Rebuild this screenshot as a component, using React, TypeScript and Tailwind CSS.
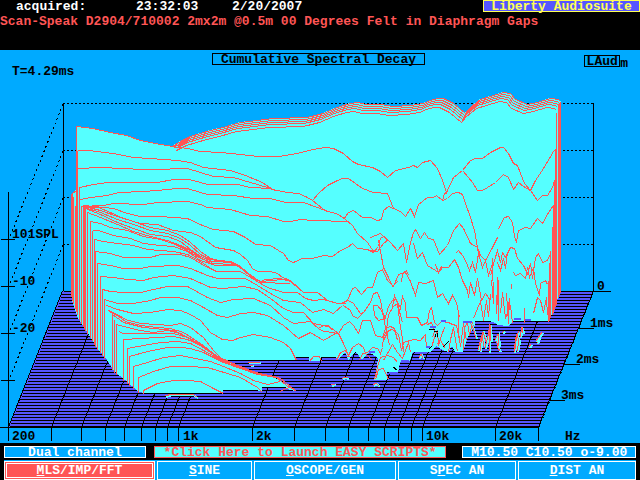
import type { ReactNode } from 'react'

const RED = '#ff5555'
const CYAN = '#55ffff'
const BLUE = '#5555ff'

const freqTicks = [8, 51, 81, 105, 124, 141, 155, 167, 178, 252, 294, 325, 348, 368, 384, 398, 411, 422, 495]

const freqLabels = [
  { x: 12, text: '200' },
  { x: 183, text: '1k' },
  { x: 256, text: '2k' },
  { x: 426, text: '10k' },
  { x: 499, text: '20k' },
  { x: 565, text: 'Hz' },
]

const timeTicks = [
  { x: 593, y: 291, w: 18, lx: 597, text: '0' },
  { x: 579, y: 328, w: 15, lx: 590, text: '1ms' },
  { x: 564, y: 364, w: 16, lx: 576, text: '2ms' },
  { x: 550, y: 400, w: 15, lx: 561, text: '3ms' },
]

const levelLabels = [
  { y: 238, text: '101SPL' },
  { y: 285, text: '-10' },
  { y: 332, text: '-20' },
]

const crest =
  '180,141 190,136 210,130 223,127 240,122 257,120 273,118 307,117 323,113 337,107 350,103 357,102 366,104 380,104 393,106 410,105 423,103 430,100 437,98 443,98 453,103 459,108 465,113 470,107 480,99 490,96 503,92 510,93 515,99 527,104 537,102 550,98 558,99 560,101'

const body =
  '72,193 76,190 76,126 92,128 110,132 126,135 140,140 160,144 172,146 180,141 190,136 210,130 223,127 240,122 257,120 273,118 307,117 323,113 337,107 350,103 357,102 366,104 380,104 393,106 410,105 423,103 437,98 443,98 453,103 465,113 470,107 480,99 490,96 503,92 510,93 515,99 527,104 537,102 550,98 558,99 561,101 561,291 558,298 553,312 548,321 513,321 508,326 498,325 495,323 490,321 475,321 475,325 468,337 463,352 455,352 452,346 448,352 443,350 436,346 431,352 425,352 413,352 410,361 400,362 398,373 387,372 387,380 374,380 377,366 378,358 369,352 362,360 356,352 350,357 349,361 345,352 338,360 335,357 321,357 320,361 309,361 309,357 296,357 296,360 223,360 243,367 257,373 270,376 280,380 296,391 290,390 285,387 262,387 262,392 257,390 223,390 223,393 143,393 138,391 125,380 115,372 107,360 97,348 88,333 78,318 72,300'

// left edge of every slice: x, top y, floor y
const leftEdges = [
  [71, 193, 296], [72, 193, 300], [73, 196, 303], [75, 205, 308], [76, 126, 311], [77, 150, 314], [79, 187, 319], [81, 206, 323],
  [83, 205, 326], [84, 206, 328], [85, 208, 330], [87, 212, 333], [90, 221, 337], [92, 230, 340], [94, 239, 344],
  [95, 250, 346], [97, 263, 349], [100, 276, 352], [102, 289, 355], [104, 299, 358], [112, 314, 369], [114, 319, 372],
  [116, 324, 374], [123, 338, 380], [127, 347, 383], [129, 355, 385], [133, 366, 388], [138, 377, 392], [143, 390, 393],
]

const rightEdges = [
  [560, 101, 292], [559, 102, 294], [558, 103, 297], [556, 112, 304], [555, 148, 306], [554, 180, 309],
  [553, 204, 312], [552, 226, 314], [550, 250, 317], [549, 262, 320], [548, 280, 321],
]

const slices = [
  // back wall
  '76,126 92,128 110,132 126,135 140,140 160,144 172,146 187,148 200,151 220,152 240,154 258,156 278,156 297,153 312,149 325,147 333,148 343,153 352,161 358,164 372,167 380,171 387,177 395,170 408,167 413,165 417,167 422,162 430,160 437,168 442,180 446,192 453,177 462,170 470,160 475,158 482,158 490,152 500,147 503,147 508,153 513,163 517,165 520,173 524,183 530,190 535,180 543,168 553,151 556,148',
  '172,146 180,141',
  '172,146 180,144',
  '173,147 180,147',
  '77,150 88,150 113,153 133,157 150,158 163,159 177,160 190,162 203,167 230,170 245,175 262,182 272,189 287,192 298,193 305,196 312,200 322,208 325,210 338,214 345,219 352,225 357,233 367,242 373,251 376,250',
  '77,168 100,167 122,168 143,169 160,169 180,168 187,168 200,172 213,176 233,177 250,182 267,187 275,190',
  '79,187 93,184 107,182 157,182 173,179 187,179 193,180 207,184 237,184 250,187 270,188',
  '80,199 90,197 107,195 118,192 143,191 157,190 177,188 187,188 200,192 207,194 233,195 253,198 270,198 285,202 303,202 317,207 327,211',
  '81,206 103,205 113,203 143,204 157,202 187,201 200,204 207,207 230,209 250,215 267,216 283,221 290,221 300,219 313,220 347,221',
  '312,200 318,193 327,185 337,180 342,178 348,178 355,183 362,188 373,192 387,193 393,208 400,211 405,216 410,208 414,216 418,204 427,197 433,197 436,195 442,200 447,198 452,193 458,192 462,194 465,203 470,217 474,230 477,247 480,255',
  '343,219 348,212 353,210 362,217 370,217 377,220 381,219 383,210 388,206 393,208',
  '463,171 472,182 477,190 482,190 487,187 495,182 503,174 508,177 513,189 518,182 523,186 530,190 537,200 542,195 547,195 552,187 554,180',
  '442,200 444,193 446,192',
  // middle left
  '83,205 93,206 113,208 127,213 140,216 160,216 173,217 187,218 202,225 213,229 233,231 245,237 255,244 270,245 278,250 283,253 288,260 293,262 302,258 312,258 323,255 332,256 340,250 347,247 352,243 357,248 367,249 373,252 378,246 380,238 383,236',
  '83,206 98,207 110,212 123,218 140,223 157,224 173,230 190,232 200,236 215,247 233,250 240,254 247,260 252,268 257,271 270,271 277,273 282,277 290,280 303,292 317,292 327,300 337,303 345,303',
  '84,206 100,210 117,216 133,221 150,227 167,230 180,235 190,242 200,251 210,258 218,260 230,261 240,266 250,275 258,282 265,279 280,278 290,281 303,292',
  '84,207 100,212 117,219 133,224 150,230 167,233 180,238 190,245 200,254 210,259 230,262 240,267 250,276 260,281 282,279',
  '85,208 100,214 117,222 133,228 150,234 167,236 180,241 190,249 200,256 212,261 232,262 245,271 258,282 290,283',
  '87,212 100,217 117,224 133,231 150,236 167,240 180,245 190,250 200,257 210,263 235,264 248,273 262,283',
  '90,221 100,223 110,227 127,230 143,236 160,239 175,244 187,250 200,258 212,262',
  '92,230 98,230 113,235 130,238 143,243 160,245 173,246 187,251 200,260 215,265 238,265',
  '94,239 103,241 117,243 133,245 147,249 173,251 187,254 200,261 215,271 240,271 250,277 267,287 283,292 297,292 305,298 313,300 323,299 337,303',
  '95,251 110,253 123,257 150,257 160,254 180,254 190,257 207,267 217,271',
  '97,263 110,265 123,268 140,268 150,266 177,265 190,268 207,275 217,278 245,278 257,285 270,293 283,300 300,302 312,312 323,309 333,313 342,305',
  '100,276 113,277 127,279 143,280 153,277 173,275 190,278 210,287 223,288 243,286 257,289 270,298 283,308 293,312 303,312 313,323 323,325 330,327 338,333 343,343 349,357',
  '102,289 110,291 123,292 140,292 153,289 167,286 187,286 207,297 220,302 233,299 253,298 270,305 283,317 293,323 310,321 318,328 323,331 333,332 340,334',
  '104,299 117,303 133,303 150,300 160,297 177,297 190,300 203,307 217,315 227,317 240,313 253,312 267,315 283,325 298,338 310,332 323,340 335,333',
  '106,305 117,309 133,313 150,312 167,309 180,310 190,314 200,320 210,332 222,339 232,340 240,337 253,334 270,337 283,342 290,348 296,360',
  '318,328 323,325 328,325 332,330',
  // front left
  '108,310 117,314 125,319 140,323 157,324 170,325 180,323 190,327 203,337 213,350 223,360',
  '109,311 117,315 125,321 140,325 157,327 170,328 183,332 200,343 213,353 223,360 243,367 257,373 270,375 280,378 296,391',
  '112,314 123,322 143,327 173,330 187,337 200,345 215,355 235,364',
  '116,324 123,326 140,330 153,332 167,330 180,333 193,340 203,347 223,361 250,371 272,376',
  '119,331 122,333 150,333 173,333 187,337 200,344 210,352',
  '123,339 140,338 157,337 173,336 187,339 200,345 213,354 243,368 262,374',
  '127,348 143,345 160,342 177,341 190,343 203,350 223,361 243,369 258,374',
  '129,356 147,351 167,347 180,347 190,348 203,352 223,362 243,369 257,374 276,377 290,388',
  '133,366 147,362 163,357 180,355 190,357 210,361 223,366 240,373 253,380 267,384 280,381',
  '138,377 153,371 170,366 187,366 207,367 227,373 240,377 257,387 262,392',
  '143,390 157,383 173,380 187,380 200,381 213,388 223,393',
  '280,391 285,388 290,387 296,391',
  // breakup region
  '340,303 347,300 352,288 355,287 361,294 367,287 372,287 377,272 382,269 387,280 393,286 398,274 405,272 410,281 415,295 418,282 425,283 433,280 437,297 442,293 448,303 452,295 456,302 459,317',
  '340,303 348,300 353,303 360,313 363,312 370,302 373,293 377,292 380,300 383,317 389,345',
  '343,305 350,310 352,315 357,318 363,312',
  '338,333 343,325 349,321 353,325 358,333 362,320 370,320 375,335 382,337 385,328 390,326 394,328 397,340',
  '373,305 374,315 378,320 385,318 381,310 377,305 373,305',
  '347,357 352,347 358,343 363,347 365,353 372,360',
  '336,360 340,352 345,350 349,357',
  '359,360 362,353 367,352 372,347 377,348 380,353 382,347 383,337 386,330 388,314 393,306 397,303 400,315 402,322',
  '309,361 313,356 319,356 321,361',
  '374,379 377,366 380,357 387,355 393,357 397,362',
  '375,379 378,369 383,368 388,379',
  '370,237 380,233 390,242 397,250 403,243 406,262 410,242 413,232 415,229 420,238 424,232 428,238 433,239 439,254 447,245 453,230 459,223 463,228 470,243 477,247 478,253 485,260 492,247 497,237',
  '498,229 501,222 504,217 508,216 512,222 514,236 516,242 518,230 525,227 530,228 537,218 542,223 548,212 553,205',
  '370,250 377,251 383,243 388,239',
  '378,240 383,267 388,277 392,286 397,281',
  '413,243 417,258 422,252 427,265 435,270 438,272 442,267 448,267 454,259 458,267 462,280 467,290 468,297 470,282 474,295 477,278 481,300 485,293 490,300',
  '435,264 438,272 441,266',
  '455,253 458,250 462,255 465,260 469,270 472,262 475,272 478,253 482,267 485,260 488,275 492,263',
  '492,258 493,303 491,280',
  '497,277 496,313 498,280 498,320',
  '506,293 508,323 509,298 507,313',
  '490,275 494,260 497,250 500,262 502,252 505,257 510,247 514,248 517,258 523,265 527,273 530,263 532,278 535,257 538,253 542,262 547,260 550,253',
  '497,262 500,270 503,258 505,268 507,252',
  '513,272 515,275 520,273 525,278 527,267 529,277 533,267 535,283 539,295 540,283 545,280 547,284',
  '511,283 511,288',
  '533,313 537,297 540,300 543,312 546,297 547,315',
  '524,307 524,322',
  '473,318 477,308 480,301 483,320 486,300 488,316 490,294',
  '500,313 502,292 505,318 510,305 512,323',
  '392,307 394,295 397,303 399,320 402,338 403,352',
  '384,320 388,306 392,300 396,299 400,308 402,296 405,303 406,317 412,317 417,317 421,325 427,322 429,310 431,307 434,322 437,325 441,321 448,322 452,324 456,325 460,345',
  '383,340 388,330 392,329 398,334 401,350 403,342 413,339 420,340 425,334 426,348',
  '401,282 402,273 406,270 408,275',
  '383,360 387,353 392,344 397,352 402,358 405,350 408,342 410,352',
  '431,347 434,337 437,330 438,345 441,335 444,327',
  '448,352 450,339 453,327 455,340 457,351',
  '458,311 458,332 460,346 463,323 466,340',
  '463,350 464,327 467,322 469,335 472,322 475,337',
  '432,337 434,331 431,322 427,324',
  '445,348 440,340 436,344',
]

// pieces of ridge poking through the floor
const fragments = [
  '248,362 260,362', '250,365 253,365',
  '165,396 172,394 192,394 197,397',
  '342,379 344,377 348,378', '331,385 335,384', '373,385 376,383 379,386',
  '419,358 421,354 423,358',
  '478,350 481,338 483,332 486,341', '480,351 482,335 484,346', '476,338 473,328 470,322', '485,348 488,336 490,324',
  '489,352 490,325 491,341',
  '496,337 498,348 500,351', '495,340 498,334 499,346', '514,352 516,337 519,331', '515,349 517,334 519,341 517,351',
  '520,337 522,327 523,333', '502,333 504,331', '529,347 531,344', '537,343 539,337 542,332', '536,341 538,338 541,334',
]

function Plot() {
  return (
    <svg viewBox="0 80 640 363" className="block w-full" shapeRendering="crispEdges" role="img" aria-label="Cumulative Spectral Decay">
      {/* floor */}
      <polygon points="63,291 594,291 539,427 9,427" fill={BLUE} />
      <g stroke="#000" fill="none">
        {Array.from({ length: 46 }, (_, i) => (
          <line key={i} x1={63.5 - i * 1.2} x2={594 - i * 1.2} y1={291.5 + i * 3} y2={291.5 + i * 3} />
        ))}
        {freqTicks.map((x) => (
          <line key={x} x1={x + 0.5} y1={427} x2={x + 54.5} y2={291} />
        ))}
        <line x1="538.5" y1="427" x2="593.5" y2="291" />
        <path d="M0 427.5H539M8.5 192V441M538.5 427V441" />
        {freqTicks.map((x) => (
          <line key={x} x1={x + 0.5} y1={427} x2={x + 0.5} y2={441} />
        ))}
        {/* back wall and level grid */}
        <path d="M63.5 103V291M593.5 103V291M1 239.5H15M1 286.5H15M1 333.5H15M1 380.5H15" />
        <path d="M63 103.5H593M63 150.5H593M63 197.5H593M63 244.5H593" strokeDasharray="2 2" />
        <path d="M63 104L9 239M63 151L9 286M63 198L9 333M63 245L9 380" strokeDasharray="2 3" />
        {timeTicks.map((t) => (
          <line key={t.y} x1={t.x} y1={t.y + 0.5} x2={t.x + t.w} y2={t.y + 0.5} />
        ))}
      </g>

      <polygon points={body} fill={CYAN} />
      <g transform="translate(.5 .5)" fill="none" stroke={RED}>
        {leftEdges.map(([x, top, bottom]) => (
          <line key={x} x1={x} y1={top} x2={x} y2={bottom} />
        ))}
        {rightEdges.map(([x, top, bottom]) => (
          <line key={x} x1={x} y1={top} x2={x} y2={bottom} />
        ))}
        <polyline points="72,193 76,190" />
        <polyline points={crest} />
        <polyline points={crest} transform="translate(-1 2)" />
        <polyline points={crest} transform="translate(-2 4)" />
        <polyline points={crest} transform="translate(-3 6)" />
        <polyline points={crest} transform="translate(-4 9)" />
        {slices.map((points) => (
          <polyline key={points} points={points} />
        ))}
      </g>
      <g fill="none">
        {fragments.map((points) => (
          <g key={points}>
            <polyline points={points} stroke={CYAN} strokeWidth="2" transform="translate(1 1)" />
            <polyline points={points} stroke={RED} />
          </g>
        ))}
        <path d="M429 329h6M434 331h4M437 333v4M435 334v3M429 349l3 -3M443 347l5 -5M446 344l3 -3M393 367l4 3" stroke="#000" />
        <path d="M430 327h6M441 321h5M426 347h4M463 322h9M401 361h8M416 353h8M389 373h9M369 352h6M514 319h7M525 320h6" stroke={BLUE} strokeWidth="2" />
      </g>

      <g fontFamily="'Liberation Mono', monospace" fontSize="13" fontWeight="700" fill="#000">
        {levelLabels.map((l) => (
          <text key={l.text} x={12} y={l.y}>{l.text}</text>
        ))}
        {timeTicks.map((t) => (
          <text key={t.text} x={t.lx} y={t.y - 1}>{t.text}</text>
        ))}
        {freqLabels.map((l) => (
          <text key={l.text} x={l.x} y={440}>{l.text}</text>
        ))}
      </g>
    </svg>
  )
}

function ModeButton({ active = false, children }: { active?: boolean; children: ReactNode }) {
  if (active) {
    return (
      <button className="h-[19px] border border-white bg-[#ff5555] p-px">
        <span className="flex h-full items-center justify-center border border-white">
          <span>{children}</span>
        </span>
      </button>
    )
  }
  return <button className="h-[19px] border border-white bg-[#00aaff]">{children}</button>
}

export default function App() {
  return (
    <div className="min-h-screen bg-black font-['Liberation_Mono',monospace] text-[13px] leading-[10px] font-bold whitespace-pre">
      <header className="h-[50px] text-white">
        <div className="flex h-3 items-start justify-between pl-4">
          <div className="flex leading-[14px]">
            <span className="w-[120px]">acquired:</span>
            <span className="w-24">23:32:03</span>
            <span>2/20/2007</span>
          </div>
          <div className="flex h-3 w-[157px] items-center justify-center border border-[#ffff55] bg-[#5555ff] pt-0.5 text-[#ffff55]">
            Liberty Audiosuite
          </div>
        </div>
        <p className="mt-1 leading-[12px] text-[#ff5555]">Scan-Speak D2904/710002 2mx2m @0.5m 00 Degrees Felt in Diaphragm Gaps</p>
      </header>

      <main className="bg-[#00aaff] text-black">
        <div className="grid h-[30px] grid-cols-[200fr_auto_203fr] items-start px-3 pt-[3px]">
          <span className="mt-3.5">T=4.29ms</span>
          <h1 className="flex h-3 w-[213px] items-center justify-center border border-black pt-0.5">Cumulative Spectral Decay</h1>
          <div className="mt-0.5 flex items-start justify-end">
            <span className="flex h-3 w-9 items-center justify-center border border-black pt-0.5">LAud</span>
            <span className="mt-1">m</span>
          </div>
        </div>
        <Plot />
      </main>

      <footer>
        <div className="flex px-1 pt-[3px] pb-0.5 text-white">
          <div className="flex h-3 flex-[141] items-center justify-center border border-white bg-[#00aaff] pt-0.5">Dual channel</div>
          <button className="ml-2 flex h-3 flex-[293] items-center justify-center border border-[#ff5555] bg-[#55ffff] pt-0.5 text-[#ff5555]">
            *Click Here to Launch EASY SCRIPTS*
          </button>
          <div className="ml-4 flex h-3 flex-[173] items-center justify-center border border-white bg-[#00aaff] pt-0.5">
            M10.50 C10.50 o-9.00
          </div>
        </div>
        <nav className="mx-1 grid grid-cols-[151fr_95fr_142fr_118fr_118fr] gap-x-0.5 bg-[#00aaff] pt-px text-white">
          <ModeButton active><u>M</u>LS/IMP/FFT</ModeButton>
          <ModeButton><u>S</u>INE</ModeButton>
          <ModeButton><u>O</u>SCOPE/GEN</ModeButton>
          <ModeButton>S<u>P</u>EC AN</ModeButton>
          <ModeButton><u>D</u>IST AN</ModeButton>
        </nav>
      </footer>
    </div>
  )
}
